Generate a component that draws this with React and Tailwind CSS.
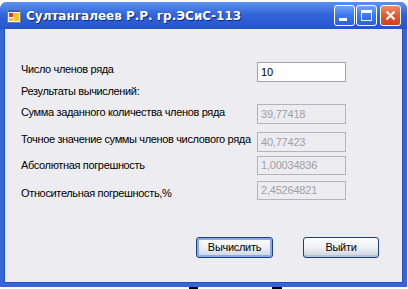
import React from "react";

const font = { fontFamily: '"Liberation Sans", Arial, sans-serif' };

const AppIcon = () => (
  <svg width="14" height="14" viewBox="0 0 14 14">
    <rect x="0.5" y="0.5" width="13" height="13" fill="#f4f4f4" stroke="#6b7fa8" />
    <rect x="1" y="1" width="12" height="2" fill="#2f5fc8" />
    <rect x="2" y="4" width="4" height="4" fill="#e03a2a" />
    <rect x="7" y="4" width="5" height="8" fill="#f2c230" />
    <rect x="2" y="9" width="4" height="3" fill="#f2c230" />
  </svg>
);

const CaptionButton = ({ kind }) => {
  const isClose = kind === "close";
  return (
    <div
      className={`w-[21px] h-[21px] rounded-[3px] border border-white flex items-center justify-center ${
        isClose
          ? "bg-gradient-to-b from-[#ee8a66] via-[#e05a30] to-[#c8421c]"
          : "bg-gradient-to-b from-[#6fa2f8] via-[#3b78ee] to-[#2a60dc]"
      }`}
    >
      {kind === "min" && (
        <div className="w-[8px] h-[3px] bg-white mt-[8px] -ml-[4px]" />
      )}
      {kind === "max" && (
        <div className="w-[11px] h-[11px] border border-white border-t-[3px]" />
      )}
      {isClose && (
        <svg width="11" height="11" viewBox="0 0 11 11">
          <path d="M1.5 1.5 L9.5 9.5 M9.5 1.5 L1.5 9.5" stroke="white" strokeWidth="2.2" />
        </svg>
      )}
    </div>
  );
};

const Field = ({ value, active }) => (
  <div
    className={`w-[89px] h-full border flex items-center pl-[3px] text-[11px] tracking-[-0.2px] ${
      active
        ? "bg-white border-[#9ca4ae] text-black"
        : "bg-[#edecf0] border-[#b4b3b8] text-[#a0a0a4]"
    }`}
  >
    {value}
  </div>
);

const Row = ({ label, value, active, h, mt, shift }) => (
  <div className="flex" style={{ height: h, marginTop: mt }}>
    <div className="w-[252px] shrink-0 pl-[16px] flex items-center text-[11px] tracking-[-0.35px] text-black whitespace-nowrap">
      <span className="relative" style={{ top: shift }}>
        {label}
      </span>
    </div>
    <Field value={value} active={active} />
  </div>
);

const Button = ({ children, focused, w }) => (
  <div
    className={`h-[21px] rounded-[3px] border border-[#1f3f7a] bg-gradient-to-b from-white via-[#eef0f4] to-[#cdd3de] flex items-center justify-center text-[11px] tracking-[-0.3px] text-black ${
      focused ? "shadow-[inset_0_0_0_2px_#86aaea]" : "shadow-[inset_0_-2px_0_#b8c3d6]"
    }`}
    style={{ width: w }}
  >
    {children}
  </div>
);

export default function App() {
  return (
    <div className="w-[408px] h-[289px] bg-white overflow-hidden pt-[2px]" style={font}>
      <div className="w-[407px] h-[285px] flex flex-col rounded-t-[7px] bg-[#3565d8]">
        <div className="h-[27px] shrink-0 rounded-t-[7px] bg-gradient-to-b from-[#5b92f0] via-[#2f62d8] to-[#2555cc] flex items-center pl-[7px] pr-[6px]">
          <AppIcon />
          <span
            className="ml-[5px] text-white font-bold [text-shadow:1px_1px_0_#0a2a88]"
            style={{ fontFamily: '"DejaVu Sans", "Liberation Sans", sans-serif', fontSize: 12 }}
          >
            Султангалеев Р.Р. гр.ЭСиС-113
          </span>
          <div className="ml-auto flex gap-[1px] items-center">
            <CaptionButton kind="min" />
            <CaptionButton kind="max" />
            <div className="w-[1px]" />
            <CaptionButton kind="close" />
          </div>
        </div>
        <div className="flex-1 flex px-[4px] pb-[4px] bg-[#3565d8]">
          <div className="flex-1 bg-[#edecf0] border border-[#2450c0] border-t-0 flex flex-col pt-[33px]">
            <Row label="Число членов ряда" value="10" active h={20} mt={0} shift={-3} />
            <div className="pl-[16px] mt-[2px] h-[14px] leading-[14px] text-[11px] tracking-[-0.35px] text-black">
              Результаты вычислений:
            </div>
            <Row label="Сумма заданного количества членов ряда" value="39,77418" h={20} mt={6} shift={-2} />
            <Row label="Точное значение суммы членов числового ряда" value="40,77423" h={20} mt={8} shift={-3} />
            <Row label="Абсолютная погрешность" value="1,00034836" h={19} mt={4} shift={0} />
            <Row label="Относительная погрешность,%" value="2,45264821" h={19} mt={6} shift={3} />
            <div className="flex mt-[37px] pl-[191px] gap-[30px]">
              <Button focused w={77}>Вычислить</Button>
              <Button w={76}>Выйти</Button>
            </div>
          </div>
        </div>
      </div>
      <div className="flex h-[2px]">
        <div className="ml-[189px] w-[9px] bg-black" />
        <div className="ml-[74px] w-[10px] bg-black" />
      </div>
    </div>
  );
}
